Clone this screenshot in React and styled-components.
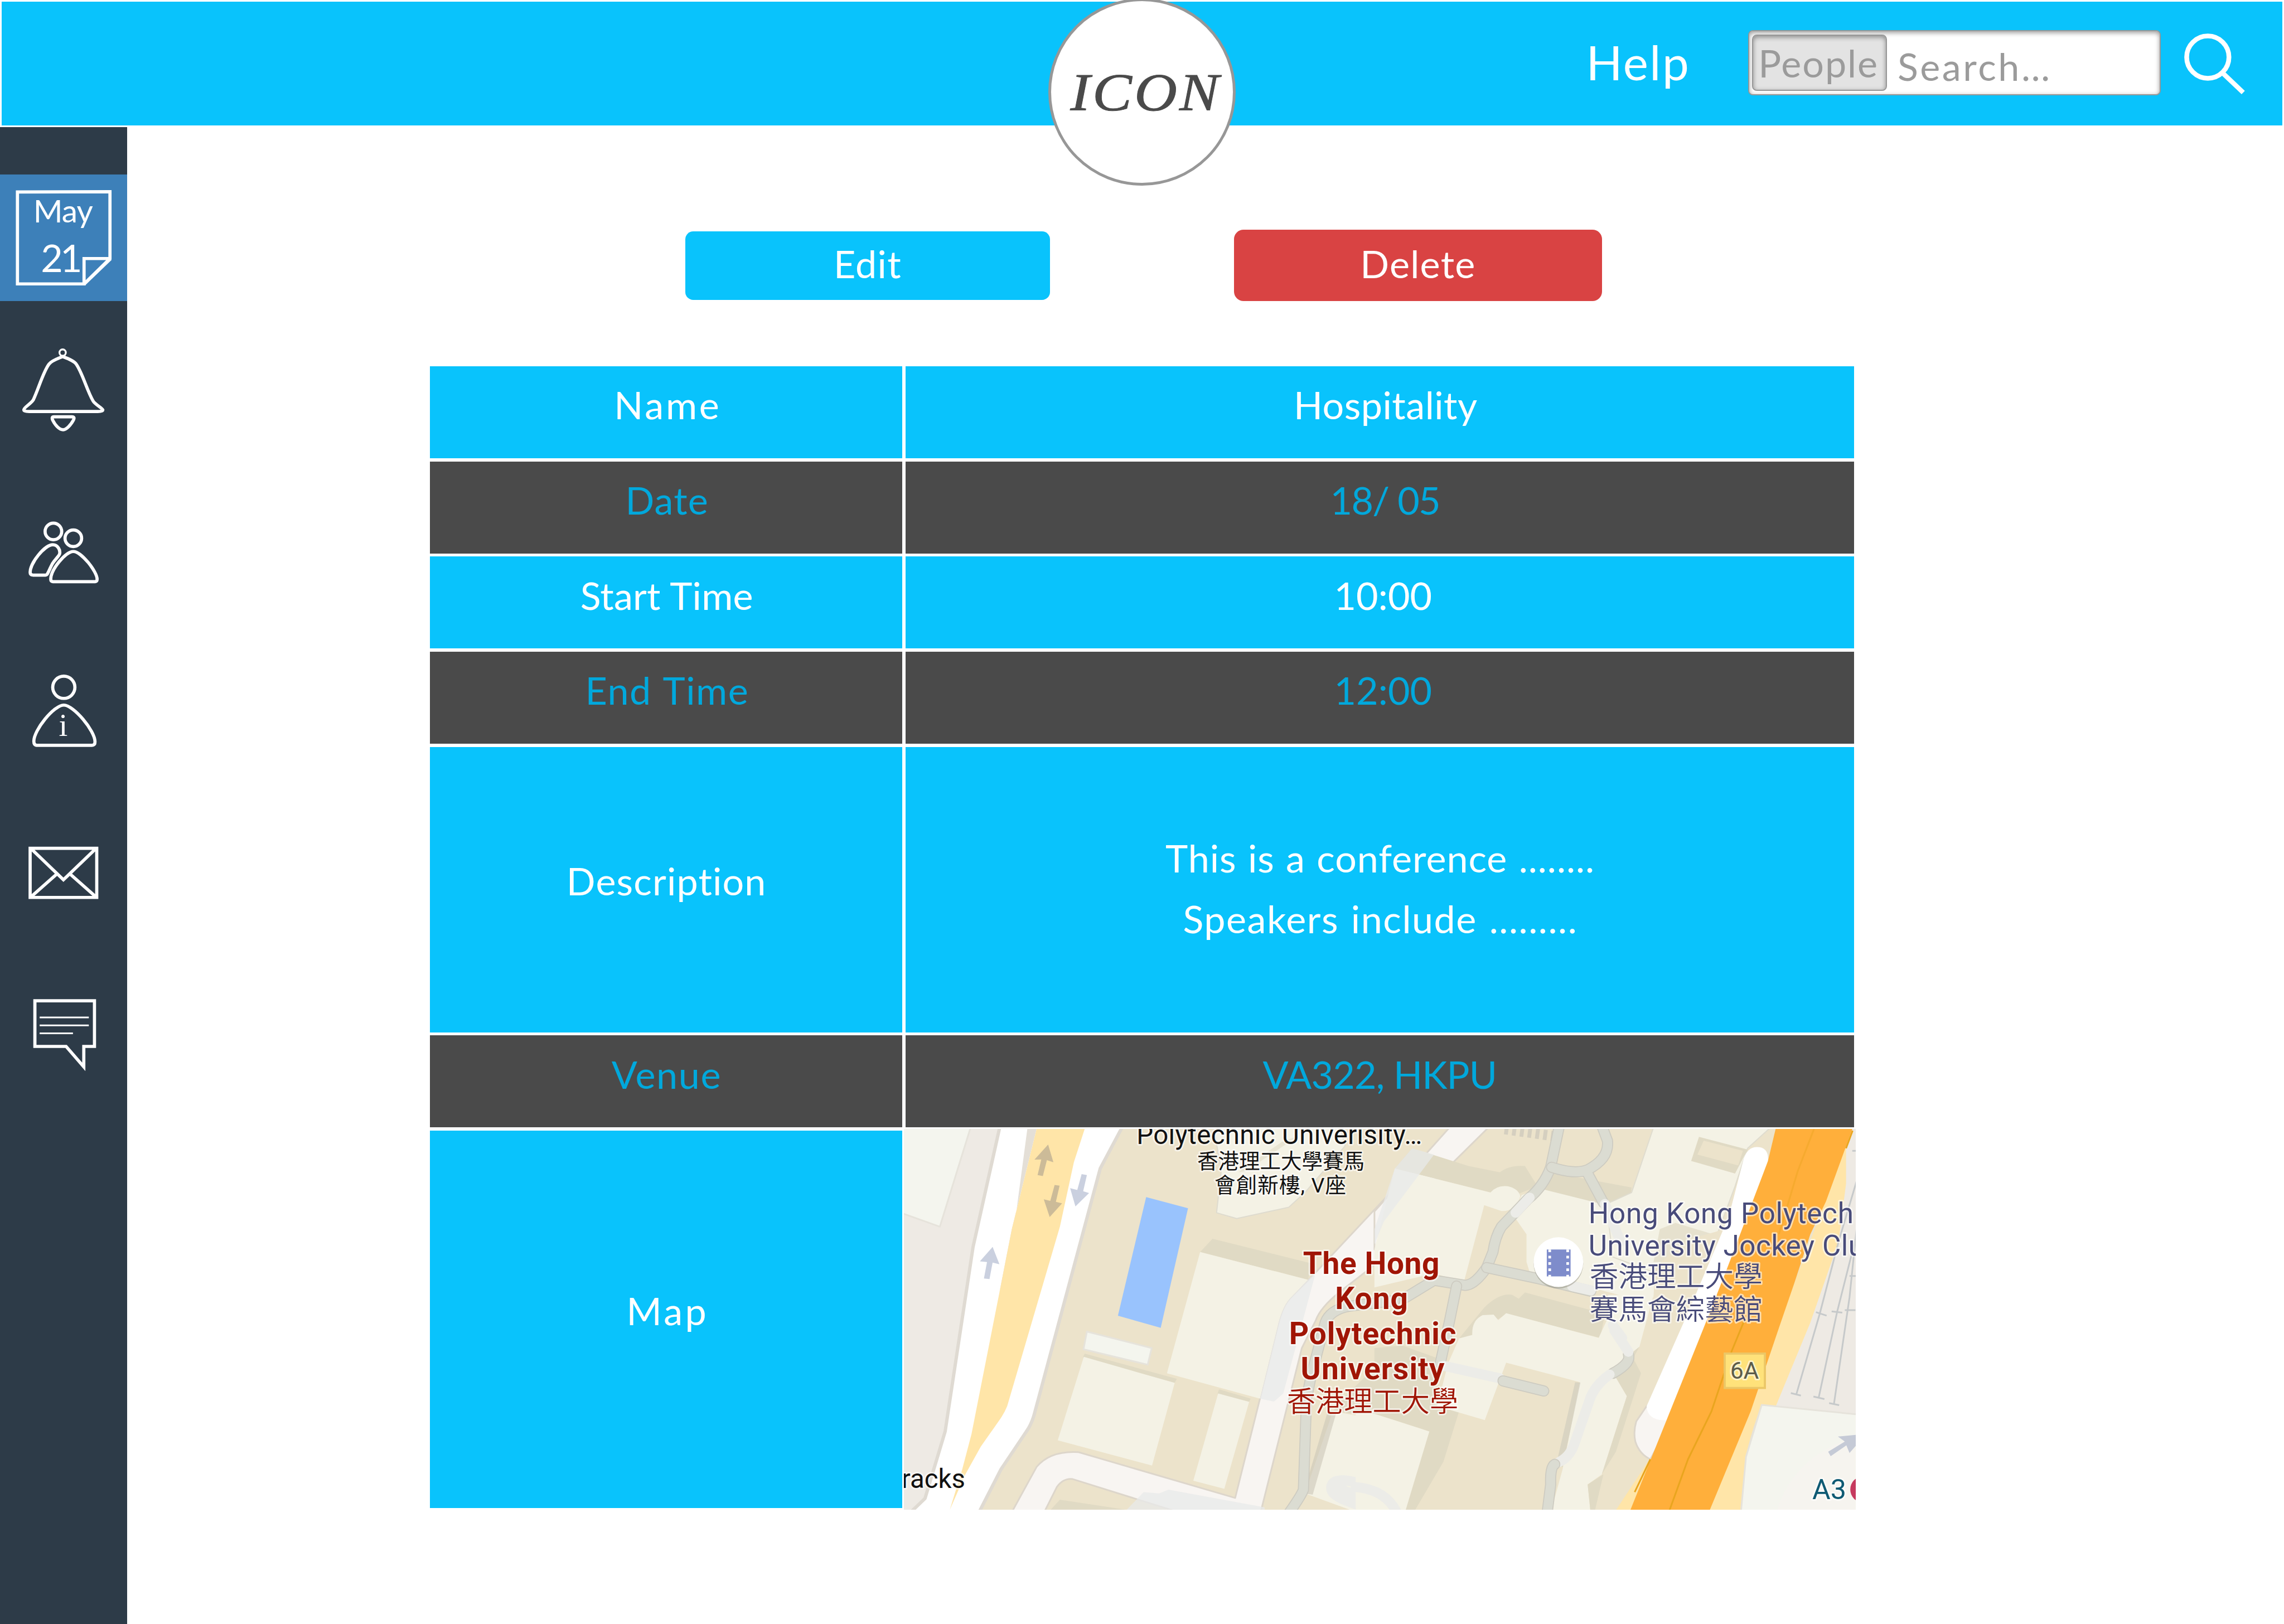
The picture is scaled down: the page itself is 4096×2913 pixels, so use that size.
import React from "react";
import styled, { createGlobalStyle, css } from "styled-components";

/* 1rem is one hundred design pixels on a 4320px wide canvas. */
const u = (n) => `${n / 100}rem`;

const color = {
  sky: "#09c3fc",
  dark: "#4a4a4a",
  darkText: "#00a8dc",
  red: "#d94343",
  navy: "#2d3b48",
  active: "#3d80b9",
  grey: "#979797",
  greyText: "#9b9b9b",
};

const GlobalStyle = createGlobalStyle`
  html { font-size: calc(100vw / 43.2); }
  body { margin: 0; background: #fff; overflow: hidden; }
  * { box-sizing: border-box; }
`;

const Page = styled.div`
  display: grid;
  grid-template: ${u(240)} ${u(2832)} / ${u(240)} 1fr;
  width: ${u(4320)};
  height: ${u(3072)};
  background: #fff;
  font-family: Lato, "Open Sans", sans-serif;
  font-size: ${u(72)};
  line-height: 1.2;
`;

const Header = styled.header`
  grid-column: 1 / -1;
  position: relative;
  padding: ${u(3)};
`;

const Bar = styled.div`
  display: flex;
  align-items: center;
  justify-content: flex-end;
  height: 100%;
  padding-right: ${u(67)};
  background: ${color.sky};
`;

const Badge = styled.div`
  position: absolute;
  left: ${u(1983)};
  top: ${u(-3)};
  width: ${u(354)};
  height: ${u(354)};
  display: flex;
  align-items: center;
  justify-content: center;
  padding: ${u(4)} 0 0 ${u(14)};
  border: ${u(6)} solid ${color.grey};
  border-radius: 50%;
  background: #fff;
  color: ${color.dark};
  font: italic ${u(100)} "Liberation Serif", serif;
  letter-spacing: ${u(4)};
  -webkit-text-stroke: ${u(1)} ${color.dark};
`;

const Wordmark = styled.span`
  transform: scaleX(1.12);
`;

const HelpLink = styled.a`
  margin: 0 ${u(109)} ${u(6)} 0;
  color: #fff;
  font-size: ${u(90)};
  letter-spacing: ${u(2.6)};
`;

const SearchBox = styled.div`
  display: flex;
  width: ${u(781)};
  height: ${u(123)};
  margin: 0 ${u(38)} ${u(3)} 0;
  padding: ${u(6)};
  border: ${u(3)} solid ${color.grey};
  border-radius: ${u(9)};
  background: #fff;
  box-shadow: inset 0 ${u(3)} ${u(9)} rgba(0, 0, 0, 0.4);
  color: ${color.greyText};
`;

const Scope = styled.span`
  display: flex;
  align-items: center;
  width: ${u(255)};
  padding: ${u(4)} 0 0 ${u(9.5)};
  border: ${u(3)} solid ${color.grey};
  border-radius: ${u(9)};
  background: #e3e3e3;
  box-shadow: inset 0 ${u(3)} ${u(9)} rgba(0, 0, 0, 0.4);
  letter-spacing: ${u(2)};
`;

const Placeholder = styled.span`
  display: flex;
  align-items: center;
  padding: ${u(17)} 0 0 ${u(20)};
  letter-spacing: ${u(3.7)};
`;

const SearchIcon = styled.svg`
  width: ${u(125)};
  height: ${u(120)};
  fill: none;
  stroke: #fff;
  stroke-width: 9;
`;

const Sidebar = styled.nav`
  display: flex;
  flex-direction: column;
  padding-top: ${u(90)};
  background: ${color.navy};
`;

const NavIcon = styled.svg`
  flex: none;
  width: ${u(240)};
  height: ${(p) => u(p.$h)};
  background: ${(p) => (p.$active ? color.active : "none")};
  fill: none;
  stroke: #fff;
  stroke-width: 6;
  text {
    fill: #fff;
    stroke: none;
    text-anchor: middle;
  }
`;

const Main = styled.main`
  padding: ${u(195)} 0 0 ${u(573)};
`;

const Actions = styled.div`
  display: flex;
  align-items: center;
  gap: ${u(348)};
  height: ${u(135)};
  margin: 0 0 ${u(123)} ${u(483)};
`;

const Button = styled.button`
  display: flex;
  align-items: center;
  justify-content: center;
  width: ${u(690)};
  height: ${u(129)};
  padding: 0 0 ${u(6)};
  border: 0;
  border-radius: ${u(15)};
  background: ${color.sky};
  color: #fff;
  font: inherit;
  letter-spacing: ${u(1.3)};
  ${(p) =>
    p.$danger &&
    css`
      width: ${u(696)};
      height: ${u(135)};
      border-radius: ${u(18)};
      background: ${color.red};
    `}
`;

const Table = styled.div`
  display: grid;
  grid-template-columns: ${u(894)} ${u(1794)};
  grid-template-rows: repeat(4, ${u(174)}) ${u(540)} ${u(174)} ${u(714)};
  gap: ${u(6)};
`;

const Cell = styled.div`
  display: flex;
  flex-direction: column;
  align-items: center;
  justify-content: center;
  padding: 0 0 ${(p) => u(p.$lift ?? 27)} ${(p) => u(p.$shift ?? 0)};
  background: ${(p) => (p.$dark ? color.dark : color.sky)};
  color: ${(p) => (p.$dark ? color.darkText : "#fff")};
  line-height: ${u(114.5)};
`;

const Text = styled.span`
  letter-spacing: ${(p) => u(p.$ls)};
  margin-right: ${(p) => u(-p.$ls)};
  word-spacing: ${(p) => u(p.$ws ?? 0)};
  white-space: pre;
`;

const MapFrame = styled.svg`
  width: ${u(1800)};
  height: ${u(720)};
  margin: ${u(-3)};
  background: #ece3cb;
  overflow: hidden;
`;

const Shapes = styled.g`
  path { vector-effect: non-scaling-stroke; stroke-linejoin: round; }
  .lot { fill: #f4f2e5; }
  .shade { fill: #e0dac4; }
  .paving { fill: #eeeae4; }
  .lawn { fill: #f4f5ee; stroke: #e6e3db; stroke-width: 3; }
  .road { fill: #fff; stroke: #dfdad2; stroke-width: 6; }
  .lane { fill: #f8f5f2; stroke: #ddd6cb; stroke-width: 3; }
  .amber { fill: #ffe5a8; }
  .highway { fill: #ffaf3b; }
  .pool { fill: #99c3fd; }
  .arrow { fill: #cad0df; }
  .arrow.brown { fill: #ccbb98; }
  .edge, .walk { fill: none; stroke-linecap: round; }
  .edge { stroke: #cdcbc1; stroke-width: 20; }
  .walk { stroke: #dbdcd2; stroke-width: 16.5; }
  .pale { fill: none; stroke: #ecece8; stroke-width: 18; stroke-linecap: round; }
  .ghost { fill: #e8eaea; opacity: 0.75; }
  .rail { fill: none; stroke: #c6c9ca; stroke-width: 3; }
  .divider { fill: none; stroke: #e9a51f; stroke-width: 3; }
`;

const PlaceText = styled.text`
  font-family: Roboto, "Noto Sans CJK TC", sans-serif;
  font-size: ${(p) => p.$size ?? 50}px;
  font-weight: ${(p) => p.$weight ?? 400};
  fill: ${(p) => p.$fill ?? "#111"};
  text-anchor: ${(p) => p.$anchor ?? "start"};
  paint-order: stroke;
  stroke: rgba(255, 255, 255, 0.6);
  stroke-width: 6px;
  stroke-linejoin: round;
`;

const navy = "#484b7a";
const crimson = "#a01505";

const CalendarIcon = () => (
  <NavIcon $active $h={240} viewBox="0 330 240 240">
    <path d="M33 363 L208 362.500 L208 489 L159 537 L33 537 Z M159 540 V489 H210" />
    <path d="M158.500 538 L209 489.500" />
    <text x="119.500" y="420.500" fontSize="60" textLength="113">May</text>
    <text x="114" y="515" fontSize="72" letterSpacing="-5">21</text>
  </NavIcon>
);

const BellIcon = () => (
  <NavIcon $h={330} viewBox="0 570 240 330" strokeLinejoin="round">
    <circle cx="118.500" cy="667.500" r="6" strokeWidth="3.500" />
    <path d="M118.500 675 C109 679 97 683 93 689 C82 703 73 736 63 757 C58 765 45 771 45 776 C45 778 50 779 55 779 H185 C190 779 194.500 778 194.500 776 C192 771 180 766 176 759 C164 738 156 706 144 689 C140 683 129 679 118.500 675 Z" />
    <path d="M102 789 H136 C140 789 141 791 139 795 C134 804 126 813.500 119.500 813.500 C112 813.500 104 804 100 796 C98 792 98 789 102 789 Z" />
  </NavIcon>
);

const PeopleIcon = () => (
  <NavIcon $h={300} viewBox="0 900 240 300">
    <circle cx="101" cy="1005.700" r="15.700" />
    <circle cx="138.700" cy="1018.700" r="15.700" />
    <path d="M100 1031 C109 1031 115 1041 112.500 1049 C110 1054 104 1059 99 1067 C95 1074 92 1083 89 1087 Q88 1088.300 86 1088.300 H62 Q57 1088 57 1083 C57 1066 84 1031 100 1031 Z" />
    <path d="M138.700 1043.700 C154 1043.700 183.700 1082 183.700 1096 Q183.700 1100.700 180 1100.700 H100 Q96 1100.700 96 1096 C96 1078 124 1043.700 138.700 1043.700 Z" />
  </NavIcon>
);

const ProfileIcon = () => (
  <NavIcon $h={300} viewBox="0 1200 240 300">
    <circle cx="120.700" cy="1300" r="21" />
    <path d="M120.700 1333.700 C139 1333.700 179.700 1382 179.700 1403 Q179.700 1409.700 174 1409.700 H69 Q64 1409 64 1402 C64 1381 102 1333.700 120.700 1333.700 Z" />
    <text x="119.500" y="1392" fontSize="60" fontFamily="Liberation Serif, serif">i</text>
  </NavIcon>
);

const MailIcon = () => (
  <NavIcon $h={300} viewBox="0 1500 240 300">
    <path d="M57 1605 H183 V1698 H57 Z M59 1606 L120 1664.500 L181 1606 M59 1696.500 L107 1654 M181 1696.500 L133 1654" />
  </NavIcon>
);

const ChatIcon = () => (
  <NavIcon $h={300} viewBox="0 1800 240 300">
    <path d="M66 1893 H178.700 V1979.300 H158.500 V2018 L125 1979.300 H66 Z" />
    <path strokeWidth="3" d="M75 1924.500 H168 M75 1939.500 H168 M75 1954.500 H138" />
  </NavIcon>
);

const Walk = ({ d }) => (
  <>
    <path className="edge" d={d} />
    <path className="walk" d={d} />
  </>
);

const WestShapes = () => (
  <Shapes transform="translate(-10 -16) scale(.5867 .4783)">
    <path className="paving" d="M0 0H330L150 1230L85 1495L50 1560H0Z" />
    <path className="lawn" d="M0 20H234L133 420L0 362Z" />
    <path className="road" d="M329 10H728L718 33L650 190L440 1150Q430 1200 412 1230L330 1380L255 1560H30L85 1495L150 1230L240 500Z" />
    <path fill="#e4dfd7" d="M415 33H445L365 430L325 680L372 430Z" />
    <path className="amber" d="M445 33H600L565 165L520 420L350 1130Q340 1160 325 1185L265 1290L215 1400L165 1540L205 1380L235 1240L325 680L365 430Z" />
    <path className="arrow brown" d="M482 95L499 165L478 157L465 220L448 216L460 154L438 155Z" />
    <path className="arrow brown" d="M487 382L527 328L507 322L519 258L503 255L489 318L468 312Z" />
    <path className="arrow" d="M570 340L614 287L595 280L607 216L590 212L576 275L553 268Z" />
    <path className="arrow" d="M303 500L325 569L303 562L293 627L275 625L285 560L262 557Z" />
    <path className="pool" d="M798 303L933 347L845 820L707 772Z" />
    <path className="lawn" d="M607 835L816 900L803 966L596 905Z" />
    <path className="shade" d="M594 937L600 922L897 1022L890 1038Z" />
    <path className="lot" d="M597 935L890 1038L817 1365L513 1265Z" />
    <path className="shade" d="M1028 1082L1033 1063L1135 1100L1130 1113Z" />
    <path className="lot" d="M1030 1080L1130 1113L1050 1457L950 1425Z" />
    <path className="lot" stroke="#dedbcf" strokeWidth="2" d="M1015 20H1420L1440 100L1310 285L1258 343L1090 388L1025 365L1040 200Z" />
    <path className="shade" d="M1235 85L1290 60L1120 200L1095 205Z" opacity=".6" />
    <path className="shade" d="M1440 1090L1600 900V1180L1400 1150Z" />
    <path className="lane" d="M360 1560L445 1370Q490 1305 580 1312L1085 1493L1165 1100L1225 800Q1240 730 1265 700L1330 620L1620 240V490L1420 680Q1360 740 1345 790L1300 900L1165 1560H930L560 1418Q530 1415 510 1450L465 1560Z" />
    <path className="shade" d="M972 520L1012 468L1330 565L1320 630Z" />
    <path className="lot" d="M972 520L1320 630L1265 700Q1240 730 1225 800L1165 1100L865 1000Z" />
    <path className="ghost" d="M1320 630L1345 600L1240 1080L1210 1112L1165 1100L1225 800Q1240 730 1265 700Z" opacity=".5" />
    <path className="ghost" d="M735 1540L790 1470L840 1475L870 1460L1180 1530V1560H735Z" />
    <path className="shade" d="M490 1540L520 1500L735 1540Z" />
    <path className="lot" d="M1400 1150L1620 1200V1560H1500L1310 1475Z" />
    <path fill="#cbc7b8" opacity=".6" d="M1385 1145L1412 1152L1335 1480L1305 1475Z" />
    <path className="pale" d="M1600 1460L1450 1425Q1390 1415 1395 1460Q1400 1490 1480 1520L1620 1550M1400 1440Q1480 1500 1600 1510" />
    <Walk d="M1600 712L1450 735Q1390 750 1375 800L1330 1010L1315 1100L1305 1460Q1300 1480 1260 1550" />
  </Shapes>
);

const EastShapes = () => (
  <Shapes transform="translate(890 -16) scale(.5931 .4783)">
    <path className="lane" d="M245 20H370L125 320L0 510V360Z" />
    <path className="shade" d="M120 110L300 180L400 205Q430 175 480 180L520 260L460 290L370 285L65 190Z" />
    <path className="lot" d="M65 190L370 285Q390 255 425 260Q460 270 465 300Q450 360 405 358L350 335L285 640L190 605L0 660V510Z" />
    <path className="ghost" d="M120 110L190 135L30 400L0 490V430L65 190Z" />
    <path className="shade" d="M560 205L820 265L815 320L740 345L500 270Z" />
    <path className="lot" d="M470 295L530 270L740 335L900 430V600L890 700L780 690L690 660L500 620L485 560V450L440 370Z" />
    <path className="lot" stroke="#dfdccf" strokeWidth="2" d="M892 20H1270L1190 110L1150 260L1060 560L890 600L760 540L740 330L820 285Z" />
    <path className="shade" d="M1035 65L1190 115L1150 210L1010 160Z" />
    <path fill="#ece3cb" d="M1050 80L1175 120L1160 178L1030 135Z" />
    <path className="shade" d="M910 430L960 405L1080 450L1040 560L890 560Z" opacity=".7" />
    <path fill="#ece3cb" d="M1000 470L1090 440L1130 420L870 1130L835 1190L760 1290L850 1000L825 925L845 895L890 700L895 580Z" />
    <path className="shade" d="M480 680L735 765L720 860L420 765L310 855L270 862L350 740Q400 680 440 690L460 705Z" />
    <path className="shade" d="M0 900L90 890L200 940L200 1130L270 1150L220 1350L130 1540H90L175 1230L0 1160Z" />
    <path className="lot" d="M420 762L715 860L745 780V690H890L845 895L755 985L805 1090L725 1400L680 1440L690 1560H560L600 1380L655 1035L420 958L352 1185L200 1130L235 960L270 862L312 848Q310 790 345 770L380 768L395 790Z" />
    <path className="shade" d="M845 895L825 940L850 1000L770 1310L725 1400L805 1090L755 985Z" />
    <path className="shade" d="M680 1440L730 1400L700 1560H690Z" />
    <path className="lot" d="M0 1160L175 1230L95 1560H-60V1160Z" />
    <path fill="#cdcabd" opacity=".6" d="M640 1035L657 1037L600 1370L580 1360Z" />
    <path className="pale" d="M-60 1450Q40 1460 75 1560" />
    <path fill="none" stroke="#d5cfbf" strokeWidth="18" strokeDasharray="7 7" d="M415 35L590 65" />
    <Walk d="M590 20L562 185Q540 260 490 310L405 420Q385 460 378 520L358 582Q320 650 290 652L190 632L100 700" />
    <Walk d="M565 185Q640 215 680 195Q750 150 743 80L725 20M678 205L730 325" />
    <Walk d="M358 582L520 625L690 675M262 655L240 790L210 960" />
    <path className="pale" d="M495 305L450 365M735 330L785 480M220 970L400 1020M630 655L690 672M760 810L790 860" />
    <Walk d="M410 1030L540 1070" />
    <Walk d="M810 925Q820 960 760 1000" />
    <path className="pale" d="M765 830L810 915M750 1005Q700 1050 685 1110L640 1270Q625 1330 590 1350" />
    <Walk d="M575 1360Q560 1370 562 1440L550 1560" />
    <path className="lane" d="M868 1130L835 1190Q825 1230 832 1270Q845 1320 880 1340L950 1180Z" />
    <path fill="#fff" d="M1178 150Q1190 105 1220 105Q1258 105 1255 160L1070 820L935 1185Q870 1190 868 1130L1000 760L1130 380Z" />
    <path className="paving" d="M1500 20H1560V1180L1270 1140L1390 700Z" />
    <path className="amber" d="M1525 33L1504 100V250L1480 480L1390 800L1280 1130L1235 1125Q1200 1230 1185 1330L1168 1560H1060Z" />
    <path className="amber" d="M760 1560L880 1335L860 1540Z" />
    <path className="lawn" d="M1235 1125L1560 1165V1560H1168L1185 1330Z" />
    <path fill="#f6f4ef" d="M1280 1560Q1330 1330 1534 1250V1560Z" />
    <path className="highway" d="M1282 20L1255 160L1200 340L1120 600L1050 820L930 1190L810 1560H1063L1200 1150L1290 820L1340 640L1390 450L1440 320L1528 20Z" />
    <path className="divider" d="M1402 33L1350 200L1290 450" opacity=".4" />
    <path className="divider" d="M1180 790L1140 910L1110 1020L1075 1150L1000 1340L940 1545" />
    <path className="divider" d="M880 1340L830 1470M1525 40L1504 110" />
    <path className="rail" d="M1540 230L1480 480L1420 765L1345 1085M1540 440L1475 760L1417 1095M1540 400L1515 700L1465 1125M1408 758L1442 772M1458 755L1492 760M1500 750H1534M1328 1078L1360 1088M1400 1092L1435 1102M1450 1118L1482 1126M1524 120H1540M1515 615H1540" />
    <path fill="#c5cad6" d="M1447 1310L1500 1270L1478 1250L1540 1243V1280L1515 1315L1505 1285L1455 1328Z" />
  </Shapes>
);

const CampusMap = () => (
  <MapFrame viewBox="0 0 1800 720">
    <WestShapes />
    <EastShapes />

    <circle cx="1238" cy="255" r="47" fill="#8a8778" opacity=".45" />
    <circle cx="1238" cy="252" r="47" fill="#fff" />
    <path fill="#7e8ccb" d="M1216 228H1261V279H1216Z" />
    <path stroke="#fff" strokeWidth="5" strokeDasharray="5 7" d="M1221.500 228V282M1255.500 228V282" />

    <rect x="1552.500" y="425" width="76" height="65" fill="#ffe27a" stroke="#ebc767" strokeWidth="4" />
    <circle cx="1815" cy="682" r="25" fill="#c63a5e" />

    <PlaceText x="440" y="28" textLength="540">Polytechnic Univerisity…</PlaceText>
    <PlaceText x="713" y="75" $size={39.6} $anchor="middle">香港理工大學賽馬</PlaceText>
    <PlaceText x="712" y="120" $size={39.6} $anchor="middle" textLength="249">會創新樓, V座</PlaceText>
    <PlaceText x="116" y="679" $anchor="end">racks</PlaceText>

    <PlaceText x="884" y="274.500" $size={58} $weight={700} $fill={crimson} $anchor="middle" textLength="258">The Hong</PlaceText>
    <PlaceText x="884.500" y="340.500" $size={58} $weight={700} $fill={crimson} $anchor="middle" textLength="138">Kong</PlaceText>
    <PlaceText x="886.500" y="407" $size={58} $weight={700} $fill={crimson} $anchor="middle" textLength="316">Polytechnic</PlaceText>
    <PlaceText x="886.500" y="473.500" $size={58} $weight={700} $fill={crimson} $anchor="middle" textLength="272">University</PlaceText>
    <PlaceText x="886.500" y="535" $size={54} $weight={350} $fill={crimson} $anchor="middle">香港理工大學</PlaceText>

    <PlaceText x="1295" y="178" $size={54} $fill={navy} textLength="501">Hong Kong Polytech</PlaceText>
    <PlaceText x="1295" y="239" $size={54} $fill={navy} letterSpacing=".6">University Jockey Clu</PlaceText>
    <PlaceText x="1297" y="299" $size={54.5} $weight={350} $fill={navy}>香港理工大學</PlaceText>
    <PlaceText x="1297" y="361" $size={54.5} $weight={350} $fill={navy}>賽馬會綜藝館</PlaceText>

    <PlaceText x="1590" y="473" $size={45} $fill="#5c5c4a" $anchor="middle">6A</PlaceText>
    <PlaceText x="1718" y="700" $size={53} $fill="#0e5a73">A3</PlaceText>
  </MapFrame>
);

const rows = [
  { label: ["Name", 4], value: ["Hospitality", 0.5], shift: 21 },
  { label: ["Date", 1.2], value: ["18/ 05", -1.8], shift: 21, dark: true },
  { label: ["Start Time", 0.2, 1], value: ["10:00", 0.1], shift: 12 },
  { label: ["End Time", 1.6, 3], value: ["12:00", 0.1], shift: 12, dark: true },
];

const App = () => (
  <>
    <GlobalStyle />
    <Page>
      <Header>
        <Bar>
          <HelpLink>Help</HelpLink>
          <SearchBox>
            <Scope>People</Scope>
            <Placeholder>Search…</Placeholder>
          </SearchBox>
          <SearchIcon viewBox="4125 60 125 120">
            <circle cx="4176" cy="108" r="40" />
            <path d="M4204 138 L4243 175" />
          </SearchIcon>
        </Bar>
        <Badge>
          <Wordmark>ICON</Wordmark>
        </Badge>
      </Header>

      <Sidebar>
        <CalendarIcon />
        <BellIcon />
        <PeopleIcon />
        <ProfileIcon />
        <MailIcon />
        <ChatIcon />
      </Sidebar>

      <Main>
        <Actions>
          <Button>Edit</Button>
          <Button $danger>Delete</Button>
        </Actions>

        <Table>
          {rows.map(({ label, value, shift, dark }) => (
            <React.Fragment key={label[0]}>
              <Cell $dark={dark} $shift={2}>
                <Text $ls={label[1]} $ws={label[2]}>{label[0]}</Text>
              </Cell>
              <Cell $dark={dark} $shift={shift}>
                <Text $ls={value[1]}>{value[0]}</Text>
              </Cell>
            </React.Fragment>
          ))}
          <Cell $lift={33}>
            <Text $ls={1.2}>Description</Text>
          </Cell>
          <Cell $lift={4}>
            <Text $ls={1} $ws={2}>This is a conference ........</Text>
            <Text $ls={1.6} $ws={3}>Speakers include .........</Text>
          </Cell>
          <Cell $dark>
            <Text $ls={1.7}>Venue</Text>
          </Cell>
          <Cell $dark>
            <Text $ls={-0.9}>VA322, HKPU</Text>
          </Cell>
          <Cell $lift={32} $shift={1}>
            <Text $ls={4.5}>Map</Text>
          </Cell>
          <CampusMap />
        </Table>
      </Main>
    </Page>
  </>
);

export default App;
